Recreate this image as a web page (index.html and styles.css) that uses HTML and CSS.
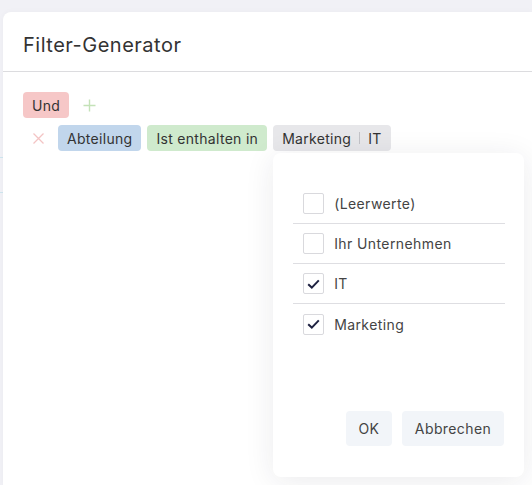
FILE: index.html
```html
<!DOCTYPE html>
<html lang="de">
<head>
<meta charset="utf-8">
<title>Filter-Generator</title>
<link rel="stylesheet" href="styles.css">
</head>
<body>
<div class="dialog">
  <div class="dialog-header">
    <h1 class="title">Filter-Generator</h1>
  </div>
  <div class="dialog-body">
    <div class="row">
      <span class="tag tag-red">Und</span>
      <span class="icon-btn plus">
        <svg width="13" height="13" viewBox="0 0 13 13"><path d="M6.5 0.5v12M0.5 6.5h12" stroke="#c4e2b8" stroke-width="1.4" fill="none"/></svg>
      </span>
    </div>
    <div class="row row-filter">
      <span class="icon-btn cross">
        <svg width="11" height="11" viewBox="0 0 11 11"><path d="M0.5 0.5l10 10M10.5 0.5l-10 10" stroke="#f3c4c4" stroke-width="1.3" fill="none"/></svg>
      </span>
      <span class="tag tag-blue">Abteilung</span>
      <span class="tag tag-green">Ist enthalten in</span>
      <div class="value-wrap">
        <span class="tag tag-gray">Marketing<span class="sep"></span>IT</span>
        <div class="popup">
          <ul class="options">
            <li class="option"><span class="check"></span><span class="opt-label">(Leerwerte)</span></li>
            <li class="option"><span class="check"></span><span class="opt-label">Ihr Unternehmen</span></li>
            <li class="option"><span class="check checked"><svg width="13" height="10" viewBox="0 0 13 10"><path d="M1.2 5.2l3.6 3.4L11.8 1.4" stroke="#1e2140" stroke-width="2" fill="none"/></svg></span><span class="opt-label">IT</span></li>
            <li class="option"><span class="check checked"><svg width="13" height="10" viewBox="0 0 13 10"><path d="M1.2 5.2l3.6 3.4L11.8 1.4" stroke="#1e2140" stroke-width="2" fill="none"/></svg></span><span class="opt-label">Marketing</span></li>
          </ul>
          <div class="actions">
            <button class="btn btn-ok">OK</button>
            <button class="btn">Abbrechen</button>
          </div>
        </div>
      </div>
    </div>
  </div>
</div>
</body>
</html>
```

FILE: styles.css
```css
html, body {
  margin: 0;
  padding: 0;
  height: 100%;
}
body {
  background-color: #f1f1f6;
  background-image:
    linear-gradient(to bottom, transparent 157px, #cfe6ef 157px, #cfe6ef 158px, transparent 158px),
    linear-gradient(to bottom, transparent 192px, #cfe6ef 192px, #cfe6ef 193px, transparent 193px);
  background-repeat: no-repeat;
  background-size: 3px 100%, 3px 100%;
  font-family: "Inter", "Open Sans", sans-serif;
  color: #333;
  overflow: hidden;
  padding-top: 12px;
  padding-left: 3px;
  box-sizing: border-box;
}
.dialog {
  background: #fff;
  border-top-left-radius: 8px;
  height: 100%;
  box-shadow: 0 0 6px rgba(0, 0, 0, 0.03);
}
.dialog-header {
  height: 60px;
  border-bottom: 1px solid #dcdcdf;
  display: flex;
  align-items: center;
  padding-left: 20px;
  padding-top: 7px;
  box-sizing: border-box;
}
.title {
  margin: 0;
  font-size: 20px;
  font-weight: 400;
  color: #333;
  letter-spacing: 0.5px;
}
.dialog-body {
  padding: 20px 20px 0 20px;
}
.row {
  display: flex;
  align-items: center;
  gap: 6px;
}
.row-filter {
  margin-top: 7px;
}
.tag {
  display: inline-flex;
  align-items: center;
  height: 26px;
  padding: 0 9px;
  border-radius: 4px;
  font-size: 14px;
  letter-spacing: 0.3px;
  color: #333;
  box-sizing: border-box;
  white-space: nowrap;
}
.tag-red { background: #f6c7c7; }
.tag-blue { background: #c1d6ec; }
.tag-green { background: #cfeacd; }
.tag-gray { background: #e7e7ea; }
.sep {
  display: inline-block;
  width: 1px;
  height: 12px;
  background: #c3c3c8;
  margin: 0 8px;
}
.icon-btn {
  display: inline-flex;
  align-items: center;
  justify-content: center;
}
.plus {
  margin-left: 8px;
}
.cross {
  width: 22px;
  margin-left: 4px;
  margin-right: 3px;
}
.value-wrap {
  position: relative;
}
.popup {
  position: absolute;
  left: 0;
  top: calc(100% + 2px);
  width: 251px;
  height: 324px;
  background: #fff;
  border-radius: 8px;
  box-shadow: 0 4px 30px rgba(30, 30, 60, 0.09);
  padding: 31px 19px 31px 20px;
  box-sizing: border-box;
  display: flex;
  flex-direction: column;
  z-index: 5;
}
.options {
  list-style: none;
  margin: 0;
  padding: 0;
  flex: 1;
}
.option {
  height: 40px;
  display: flex;
  align-items: center;
  padding-left: 10px;
  border-bottom: 1px solid #dedee2;
  box-sizing: border-box;
}
.option:last-child {
  border-bottom: none;
}
.check {
  width: 21px;
  height: 21px;
  border: 1px solid #d9d9dd;
  border-radius: 2px;
  box-sizing: border-box;
  display: inline-flex;
  align-items: center;
  justify-content: center;
  margin-right: 10px;
}
.opt-label {
  font-size: 14px;
  letter-spacing: 0.4px;
  color: #444;
}
.actions {
  display: flex;
  justify-content: flex-end;
  gap: 10px;
  padding-right: 1px;
}
.btn {
  height: 35px;
  border: none;
  border-radius: 4px;
  background: #f2f5f9;
  font-family: inherit;
  font-size: 14px;
  letter-spacing: 0.4px;
  color: #444;
  padding: 0 13px;
}
.btn-ok {
  width: 46px;
  padding: 0;
}
```
